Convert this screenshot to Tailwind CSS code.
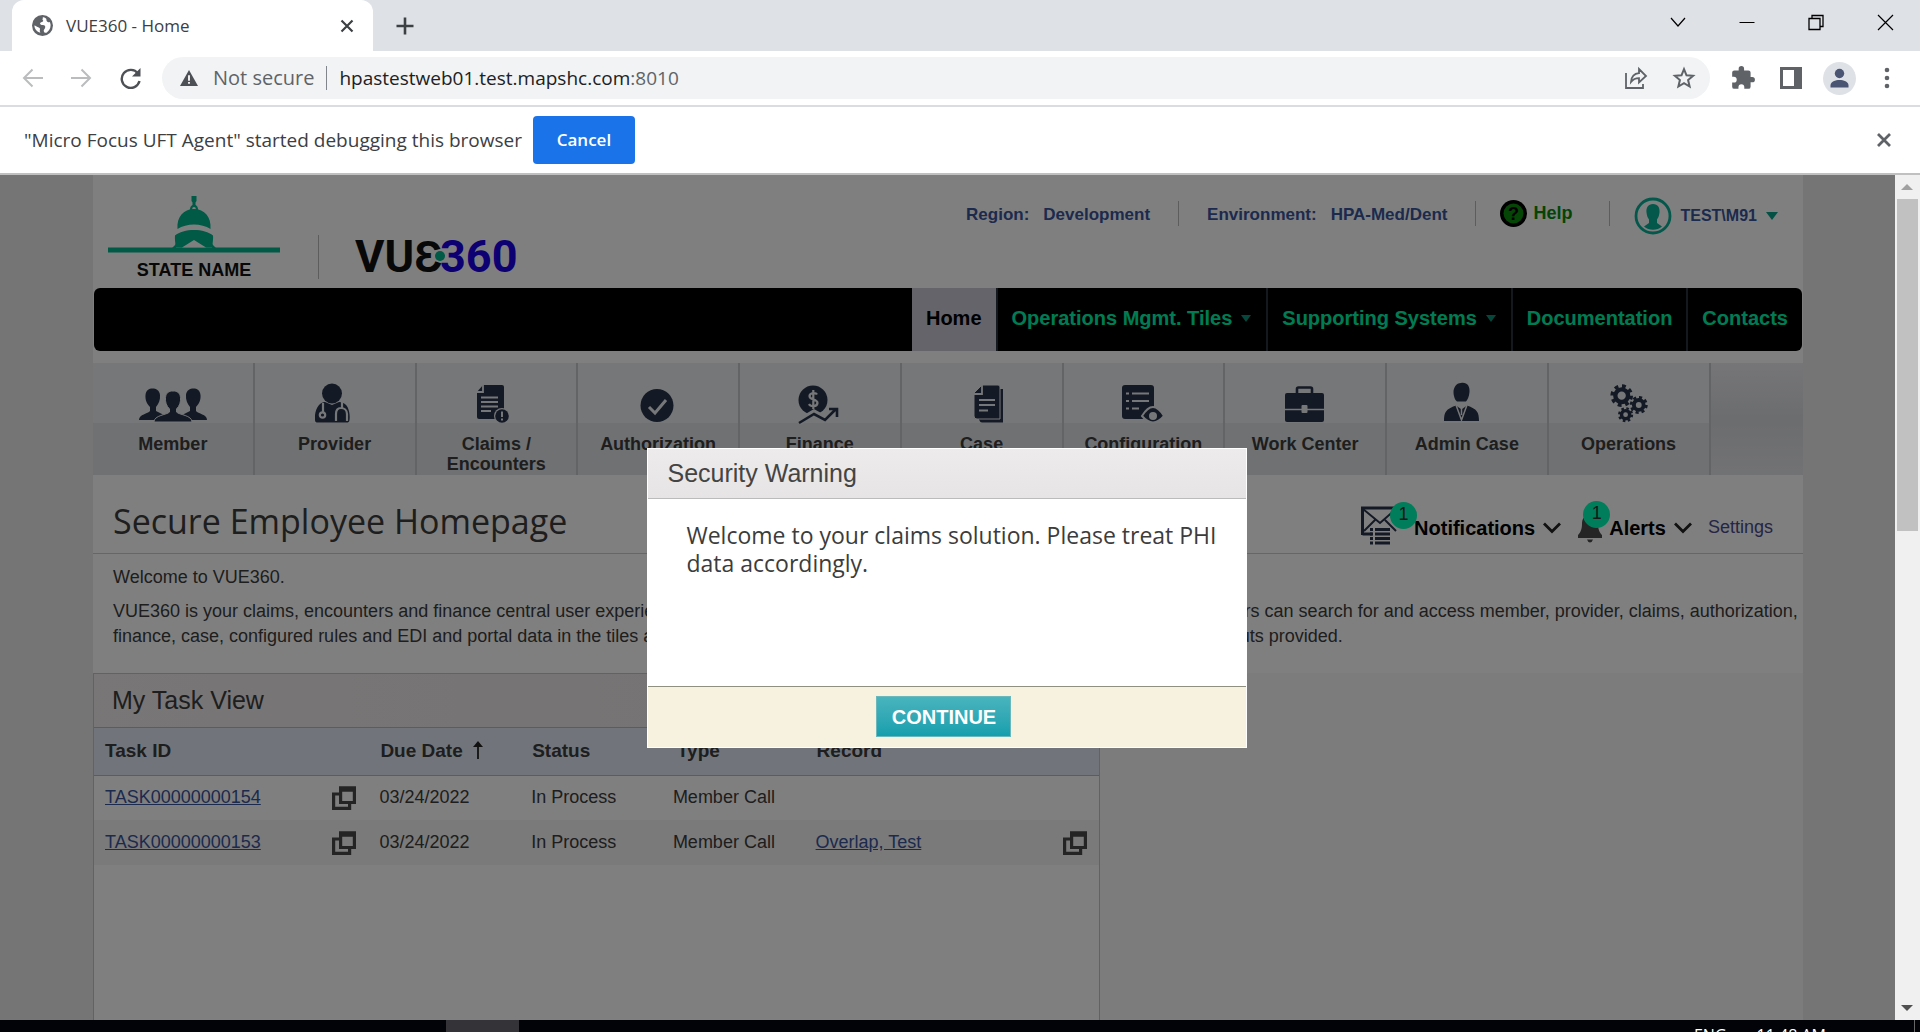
<!DOCTYPE html>
<html lang="en">
<head>
<meta charset="utf-8">
<title>VUE360 - Home</title>
<script src="https://cdn.jsdelivr.net/npm/@tailwindcss/browser@4"></script>
</head>
<body class="h-screen flex flex-col overflow-hidden bg-white font-['Liberation_Sans',Arial,sans-serif] text-[18px] text-[#3c3c3c]">

<!-- Browser tab strip -->
<div class="flex shrink-0 h-[51px] bg-[#dee1e6] font-['Open_Sans',sans-serif] items-stretch pl-3">
  <div class="flex items-center w-[361px] bg-white rounded-t-xl pl-5 pr-4">
    <svg class="size-[21px]" viewBox="0 0 24 24"><circle cx="12" cy="12" r="12" fill="#5f6368"/><path d="M12 2.500c1.500 1-1 2 .5 3.500s-2 2-3 3 1 2.500 3 2.500 3 1 2.500 3-2 2-1.500 4 2 2 3.500 1.500A10 10 0 0 0 20.500 8c-1.500 1-2.500 0-3.500-1s0-2-1-3-2.500-1.500-4-1.500zM2.600 12c2 0 2.500 1.500 4.400 2s2.500 1.500 2 3 .5 2 .5 3.300A9.600 9.600 0 0 1 2.600 12z" fill="#fff"/></svg>
    <span class="ml-[13px] text-[17px] text-[#3c4043] grow">VUE360 - Home</span>
    <button aria-label="Close tab"><svg class="size-5" viewBox="0 0 20 20" stroke="#3c4043" stroke-width="2.200"><path d="M4.500 4.500l11 11M15.500 4.500l-11 11"/></svg></button>
  </div>
  <button aria-label="New tab" class="ml-5"><svg class="size-6" viewBox="0 0 24 24" stroke="#3c4043" stroke-width="2.600"><path d="M12 3.500v17M3.500 12h17"/></svg></button>
  <div class="ml-auto flex items-center gap-[45px] pr-[23px] pb-2">
    <button aria-label="Search tabs"><svg class="size-6" viewBox="0 0 24 24" fill="none" stroke="#000" stroke-width="1.200"><path d="M5 8l7 8 7-8"/></svg></button>
    <button aria-label="Minimize"><svg class="size-6" viewBox="0 0 24 24" stroke="#000"><path d="M4.500 12.500h15"/></svg></button>
    <button aria-label="Restore"><svg class="size-6" viewBox="0 0 24 24" fill="none" stroke="#000" stroke-width="1.300"><path d="M5 8.500h11v11H5zM8 8.500V5.500h11v11h-3"/></svg></button>
    <button aria-label="Close window"><svg class="size-6" viewBox="0 0 24 24" stroke="#000" stroke-width="1.200"><path d="M5 5l15 15M20 5L5 20"/></svg></button>
  </div>
</div>

<!-- Browser toolbar -->
<div class="flex shrink-0 h-14 items-center border-b-2 border-[#dadce0] font-['Open_Sans',sans-serif] text-[20px] pl-5 pr-[22px]">
  <button aria-label="Back"><svg class="size-6" viewBox="0 0 24 24" fill="none" stroke="#babcbe" stroke-width="2"><path d="M23 12H5M12.500 3.500L4 12l8.500 8.500"/></svg></button>
  <button aria-label="Forward" class="ml-[26px]"><svg class="size-6" viewBox="0 0 24 24" fill="none" stroke="#babcbe" stroke-width="2"><path d="M1 12h18M11.500 3.500L20 12l-8.500 8.500"/></svg></button>
  <button aria-label="Reload" class="ml-6"><svg class="size-6" viewBox="0 0 24 24" fill="none" stroke="#4d5156" stroke-width="2.400"><path d="M20 7.500A9 9 0 1 0 21.500 15"/><path d="M22.500 2v8.500H14z" fill="#4d5156" stroke="none"/></svg></button>
  <div class="ml-5 flex grow items-center h-[42px] rounded-full bg-[#f1f3f4] pl-[18px] pr-[14px] text-[#5f6368]">
    <svg class="size-[18px]" viewBox="0 0 20 18"><path d="M10 0l10 18H0z" fill="#4d5156"/><path d="M9 6h2v6H9zM9 13.500h2v2H9z" fill="#fff"/></svg>
    <span class="ml-[15px]">Not secure</span>
    <span class="mx-3 w-px h-6 bg-[#80868b]"></span>
    <div class="flex text-[19px]"><input aria-label="Address" class="field-sizing-content bg-transparent text-[#202124] outline-none" value="hpastestweb01.test.mapshc.com"><span>:8010</span></div>
    <button aria-label="Share" class="ml-auto"><svg class="size-6" viewBox="0 0 24 24" fill="none" stroke="#5f6368" stroke-width="1.800"><path d="M2 7v15h17v-4M7 16c.5-6 3.500-8.500 8-8.800V3l7 7-7 6.500v-4.300c-4 0-6 1.300-8 3.800z"/></svg></button>
    <button aria-label="Bookmark" class="ml-6"><svg class="size-6" viewBox="0 0 24 24" fill="none" stroke="#5f6368" stroke-width="2"><path d="M12 3.200l2.500 6.100 6.600.5-5 4.300 1.500 6.400L12 17.100l-5.600 3.400 1.500-6.400-5-4.300 6.600-.5z"/></svg></button>
  </div>
  <button aria-label="Extensions" class="ml-5"><svg class="size-[26px]" viewBox="0 0 24 24" fill="#5f6368"><path d="M20.500 11H19V7a2 2 0 0 0-2-2h-4V3.500a2.500 2.500 0 0 0-5 0V5H4a2 2 0 0 0-2 2v3.800h1.500a2.700 2.700 0 0 1 0 5.400H2V20a2 2 0 0 0 2 2h3.800v-1.500a2.700 2.700 0 0 1 5.400 0V22H17a2 2 0 0 0 2-2v-4h1.500a2.500 2.500 0 0 0 0-5z"/></svg></button>
  <button aria-label="Side panel" class="ml-6"><svg class="size-[22px]" viewBox="0 0 22 22"><path d="M0 0h22v22H0z" fill="#5f6368"/><path d="M3 3h11v16H3z" fill="#fff"/></svg></button>
  <button aria-label="Profile" class="ml-[21px]"><svg class="size-[33px]" viewBox="0 0 33 33"><circle cx="16.500" cy="16.500" r="16.500" fill="#dee1e6"/><g fill="#4a5574"><circle cx="16.500" cy="11.500" r="4.700"/><path d="M7.500 25.500v-2c0-4 5-5.500 9-5.500s9 1.500 9 5.500v2z"/></g></svg></button>
  <button aria-label="Menu" class="ml-5"><svg class="size-[22px]" viewBox="0 0 22 22" fill="#5f6368"><circle cx="11" cy="3" r="2.300"/><circle cx="11" cy="11" r="2.300"/><circle cx="11" cy="19" r="2.300"/></svg></button>
</div>

<!-- Debugging notice -->
<div class="flex shrink-0 h-[68px] items-center border-b-2 border-[#c0c0c0] bg-white pl-6 pr-[26px] font-['Open_Sans',sans-serif] text-[19px] text-[#3c4043]">
  <span>"Micro Focus UFT Agent" started debugging this browser</span>
  <button class="ml-[11px] h-12 w-[102px] rounded bg-[#1a73e8] text-[17px] font-semibold text-white">Cancel</button>
  <button aria-label="Dismiss" class="ml-auto"><svg class="size-5" viewBox="0 0 20 20" stroke="#5f6368" stroke-width="2.800"><path d="M4 4l12 12M16 4L4 16"/></svg></button>
</div>

<div class="flex grow min-h-0">
  <!-- Web page -->
  <div class="relative grow overflow-hidden bg-[#ebebeb] pl-[93px] pr-[92px]">
    <div class="bg-[#f8f8f8] h-full">
     <div class="bg-white">
      <header class="flex h-[113px] justify-between">
        <div class="flex pl-[15px] pt-5">
          <svg class="w-[172px] h-[92px]" viewBox="0 0 172 92">
            <g fill="#00b48c">
              <path d="M0 52.500h172v5H0z"/><path d="M83.500 1h5v5l-1 1.500v3h-3v-3l-1-1.500z"/>
              <path fill-rule="evenodd" d="M86 9.500a4.500 4.500 0 0 1 3.500 6.500h-7A4.500 4.500 0 0 1 86 9.500zm0 2.500a1.800 1.800 0 1 0 0 3.600 1.800 1.800 0 0 0 0-3.600z"/>
              <path d="M69.500 34c-1-12 6-20 16.500-20s17.500 8 16.500 20c-9-6-24-6-33 0z"/>
              <path d="M67 52.500c1-4-.5-7 0-12 8-7.500 30-7.500 38 0 .5 5-1 8 0 12z"/><path d="M62 55l6-6v6zM110 55l-6-6v6z"/>
            </g>
            <path d="M74 52.500l12-7.500 12 7.500z" fill="#fff"/>
            <text x="86" y="81" text-anchor="middle" class="font-bold text-[18px]" fill="#111">STATE NAME</text>
          </svg>
          <span class="mt-10 ml-[38px] h-11 w-px bg-[#bbb]"></span>
          <svg class="ml-9 mt-6 w-[176px] h-[68px]" viewBox="0 0 176 68">
            <text x="0" y="53" class="font-['Roboto',sans-serif] font-bold text-[45px]" fill="#111">VUƐ</text>
            <text x="85" y="53" class="font-['Roboto',sans-serif] font-bold text-[45px]" fill="#1a00e6">360</text>
            <circle cx="85" cy="37" r="6.500" fill="#fff"/><circle cx="85" cy="37" r="5" fill="#00b48c"/>
          </svg>
        </div>
        <div class="flex items-start pt-[22px] pr-[25px] text-[17px] font-bold text-[#38549c]">
          <div class="flex h-9 items-center gap-[14px]"><span>Region:</span><span>Development</span></div>
          <span class="ml-[28px] mr-[28px] mt-1 h-[25px] w-px bg-[#bbb]"></span>
          <div class="flex h-9 items-center gap-[14px]"><span>Environment:</span><span>HPA-Med/Dent</span></div>
          <span class="ml-[28px] mr-6 mt-1 h-[25px] w-px bg-[#bbb]"></span>
          <a href="#" class="flex h-8 items-center text-[18px] text-[#088a08]">
            <svg class="size-[27px] mr-[6px]" viewBox="0 0 27 27"><circle cx="13.500" cy="13.500" r="13.500" fill="#000"/><circle cx="13.500" cy="13.500" r="10" fill="#0b8a0b"/><text x="13.500" y="20" text-anchor="middle" fill="#000" class="text-[18px] font-bold">?</text></svg>Help</a>
          <span class="ml-[37px] mr-6 mt-1 h-[25px] w-px bg-[#bbb]"></span>
          <button class="flex h-[38px] items-center text-[16px]">
            <svg class="size-[38px] mr-2" viewBox="0 0 38 38"><circle cx="19" cy="19" r="17" fill="none" stroke="#08b096" stroke-width="2.800"/><path d="M19 7c5 0 7 4 6.500 8.500-.4 4-1.500 5.500-2.500 7v3.500l5 3.500a14 14 0 0 1-18 0l5-3.500v-3.500c-1-1.500-2.100-3-2.500-7C12 11 14 7 19 7z" fill="#08b096"/></svg>TEST\M91
            <svg class="ml-[9px] w-3 h-2" viewBox="0 0 12 8"><path d="M0 0h12L6 8z" fill="#08a08a"/></svg>
          </button>
        </div>
      </header>

      <nav class="mx-px flex h-[63px] justify-end overflow-hidden rounded-md bg-black text-[20px] font-bold text-[#00f8a8]">
        <a href="#" class="flex items-center px-[14px] pb-[3px] bg-[#c8c8d4] text-black">Home</a>
        <a href="#" class="flex items-center px-[14px] pb-[3px] border-l-2 border-[#28303e]">Operations Mgmt. Tiles<svg class="ml-2 w-3 h-[7px]" viewBox="0 0 12 7"><path d="M1 0h10L6 7z" fill="#0d8f78"/></svg></a>
        <a href="#" class="flex items-center px-[14px] pb-[3px] border-l-2 border-[#28303e]">Supporting Systems<svg class="ml-2 w-3 h-[7px]" viewBox="0 0 12 7"><path d="M1 0h10L6 7z" fill="#0d8f78"/></svg></a>
        <a href="#" class="flex items-center px-[14px] pb-[3px] border-l-2 border-[#28303e]">Documentation</a>
        <a href="#" class="flex items-center px-[14px] pb-[3px] border-l-2 border-[#28303e]">Contacts</a>
      </nav>

      <!-- Tiles -->
      <div class="mt-3 flex h-[112px] bg-linear-to-b from-[#ececf0] via-[#d8dadd] to-[#e4e5e8] text-center font-bold leading-5">
        <a href="#" class="flex flex-col items-center w-[9.46%] border-r-2 border-[#c6c8ca] bg-[linear-gradient(#eceef0_0,#eceef0_60px,#dfe3e6_60px)] pt-5">
          <svg class="h-10 w-[70px]" viewBox="0 0 70 40" fill="#28344a"><path d="M1 37c0-6 9-6 11-9v-4c-3-3-5-7-4.500-12C8 7 11 5.500 14.500 5.500S21.500 7 22 12c.5 5-1.500 9-4 12v4l7 3.500-8 5.500z"/><path d="M69 37c0-6-9-6-11-9v-4c3-3 5-7 4.500-12-.5-5-3.500-6.500-7-6.500S48.500 7 48 12c-.5 5 1.500 9 4 12v4l-7 3.500 8 5.500z"/><path d="M16 39c0-7 13-7 15.500-10v-3c-3-3-4.500-7-4-11.500C28 9.500 31 8 35 8s7 1.500 7.500 6.500c.5 4.500-1 8.500-4 11.500v3C41 32 54 32 54 39z" stroke="#eceef0"/></svg>
          <span class="mt-[11px]">Member</span></a>
        <a href="#" class="flex flex-col items-center w-[9.46%] border-r-2 border-[#c6c8ca] bg-[linear-gradient(#eceef0_0,#eceef0_60px,#dfe3e6_60px)] pt-5">
          <svg class="size-10" viewBox="1 0 40 40" fill="#28344a"><circle cx="18" cy="10.500" r="10"/><path d="M5 22c3-3 5-3 6-3l7 3 7-3c4 0 7 2 8.500 5 2 4 2.500 9 2 13-.3 2-1 2.500-3 2.500H4c-2 0-3-.5-3-2.500-.5-5 .5-11 4-15z"/><g fill="none" stroke="#eceef0" stroke-width="2.200"><path d="M9 20v9"/><circle cx="8.500" cy="32" r="2.700"/><path d="M28 19v6M22 38v-7c0-4 2-6 5-6s6 2 6 6v7"/></g></svg>
          <span class="mt-[11px]">Provider</span></a>
        <a href="#" class="flex flex-col items-center w-[9.46%] border-r-2 border-[#c6c8ca] bg-[linear-gradient(#eceef0_0,#eceef0_60px,#dfe3e6_60px)] pt-5">
          <svg class="size-10" viewBox="1 0 40 40"><path d="M8 2h19q2 0 2 2v32H4q-2 0-2-2V9z" fill="#28344a"/><path d="M2 9h6V2M6 14.500h17M6 19h17M6 23.500h17M6 28h10" fill="none" stroke="#eceef0" stroke-width="1.800"/><circle cx="27" cy="33" r="8" fill="#eceef0"/><circle cx="27" cy="33" r="6.800" fill="#28344a"/><path d="M27 28.500v5.500M27 35.500v2" stroke="#eceef0" stroke-width="2"/></svg>
          <span class="mt-[11px]">Claims /<br>Encounters</span></a>
        <a href="#" class="flex flex-col items-center w-[9.46%] border-r-2 border-[#c6c8ca] bg-[linear-gradient(#eceef0_0,#eceef0_60px,#dfe3e6_60px)] pt-5">
          <svg class="size-10" viewBox="0 0 40 40"><circle cx="19" cy="22.500" r="16.500" fill="#28344a"/><path d="M11 24l6 6 11-13" fill="none" stroke="#eceef0" stroke-width="3"/></svg>
          <span class="mt-[11px]">Authorization</span></a>
        <a href="#" class="flex flex-col items-center w-[9.46%] border-r-2 border-[#c6c8ca] bg-[linear-gradient(#eceef0_0,#eceef0_60px,#dfe3e6_60px)] pt-5">
          <svg class="size-10 overflow-visible" viewBox="1 0 40 40"><circle cx="14" cy="17" r="14.500" fill="#28344a"/><path d="M18 11.500c-1-2-7-2-7.500 1.500 0 4.500 8 2.500 8 7-.5 4-7 4-8.500 1M14.300 7v19" fill="none" stroke="#eceef0" stroke-width="2.200"/><path d="M0 39l15-9 11 6 12-11" fill="none" stroke="#eceef0" stroke-width="7"/><path d="M0 40l15-9 11 6 11-11M30 26h8v8" fill="none" stroke="#28344a" stroke-width="2.600"/></svg>
          <span class="mt-[11px]">Finance</span></a>
        <a href="#" class="flex flex-col items-center w-[9.46%] border-r-2 border-[#c6c8ca] bg-[linear-gradient(#eceef0_0,#eceef0_60px,#dfe3e6_60px)] pt-5">
          <svg class="size-10 overflow-visible" viewBox="-6 0 40 40"><path d="M15 6h20v33.500H14q-2 0-3-3" fill="#28344a"/><path d="M14 2h16q2 0 2 2v32H9q-3 0-3-3V10z" fill="#28344a" stroke="#eceef0"/><path d="M5.500 11H14V2M11 17h16M11 22h16M11 27.500h9" fill="none" stroke="#eceef0" stroke-width="1.800"/></svg>
          <span class="mt-[11px]">Case</span></a>
        <a href="#" class="flex flex-col items-center w-[9.46%] border-r-2 border-[#c6c8ca] bg-[linear-gradient(#eceef0_0,#eceef0_60px,#dfe3e6_60px)] pt-5">
          <svg class="size-10 overflow-visible" viewBox="0 0 40 40"><rect x="-1" y="2" width="32" height="34" rx="3" fill="#28344a"/><path d="M3 10.500h3M9 10.500h17M3 18h3M9 18h17M3 25.500h3M9 25.500h7" stroke="#eceef0" stroke-width="2.200"/><path d="M19 33q11-18 22 0-11 13-22 0z" fill="#28344a" stroke="#eceef0" stroke-width="2"/><circle cx="30" cy="33" r="4" fill="#eceef0"/></svg>
          <span class="mt-[11px]">Configuration</span></a>
        <a href="#" class="flex flex-col items-center w-[9.46%] border-r-2 border-[#c6c8ca] bg-[linear-gradient(#eceef0_0,#eceef0_60px,#dfe3e6_60px)] pt-5">
          <svg class="size-10" viewBox="0 0 40 40"><path d="M12 11V6q0-1.500 1.500-1.500h12Q27 4.500 27 6v5" fill="none" stroke="#28344a" stroke-width="2.600"/><rect y="10" width="39" height="29" rx="2" fill="#28344a"/><path d="M0 26.500h39" stroke="#eceef0" stroke-width="1.500"/><rect x="16.500" y="22" width="6" height="8" rx="1" fill="#eceef0"/></svg>
          <span class="mt-[11px]">Work Center</span></a>
        <a href="#" class="flex flex-col items-center w-[9.46%] border-r-2 border-[#c6c8ca] bg-[linear-gradient(#eceef0_0,#eceef0_60px,#dfe3e6_60px)] pt-5">
          <svg class="size-10 overflow-visible" viewBox="0 0 40 40" fill="#28344a"><path d="M14 0c6-1 9 3 8.500 9-.5 5-2 8-3.500 9.500h-9C8 17 6.500 13 6.500 9S9 0 14 0z"/><path d="M-3 38c0-9 2-12 12-15.500l5.500 4 5.500-4C30 26 32 29 32 38z"/><path d="M9 22l5.500 15L20 22M14.500 26v6" fill="none" stroke="#eceef0" stroke-width="1.500"/></svg>
          <span class="mt-[11px]">Admin Case</span></a>
        <a href="#" class="flex flex-col items-center w-[9.46%] border-r-2 border-[#c6c8ca] bg-[linear-gradient(#eceef0_0,#eceef0_60px,#dfe3e6_60px)] pt-5">
          <svg class="size-10" viewBox="-1 0 41 41" fill="none" stroke="#28344a"><circle cx="12" cy="13" r="6.500" stroke-width="4.500"/><circle cx="12" cy="13" r="9.800" stroke-width="3.600" stroke-dasharray="3.900 3.800"/><circle cx="29.500" cy="22.500" r="5" stroke-width="4"/><circle cx="29.500" cy="22.500" r="7.800" stroke-width="2.800" stroke-dasharray="3.200 2.930"/><circle cx="16" cy="32.500" r="4.200" stroke-width="3.500"/><circle cx="16" cy="32.500" r="6.500" stroke-width="2.500" stroke-dasharray="2.600 2.500"/></svg>
          <span class="mt-[11px]">Operations</span></a>
      </div>

      <!-- Page title -->
      <div class="flex h-[79px] items-center border-b border-[#ccc] pl-5 pr-[30px]">
        <h1 class="grow pb-1 pt-[17px] font-['Open_Sans',sans-serif] text-[34px] leading-[52px]">Secure Employee Homepage</h1>
        <a href="#" class="relative mt-7 flex items-center text-[20px] font-bold text-black">
          <svg class="w-[38px] h-10 mr-[15px] -mt-1" viewBox="0 0 38 40"><path d="M1.500 29V2H36v17M1.500 28h10" fill="none" stroke="#28344a" stroke-width="3"/><path d="M2 3l17 14L35 3M3 25l11-11M35 25L24 14" fill="none" stroke="#28344a" stroke-width="2"/><path d="M9 23.500h3M14 23.500h15M9 28h3M14 28h15M9 32.500h3M14 32.500h15M9 37h3M14 37h15" stroke="#28344a" stroke-width="3"/></svg>
          <span class="absolute left-[29px] -top-2 size-[27px] rounded-full bg-[#00fab4] text-center text-[18px] font-normal leading-6 text-[#333]">1</span>
          Notifications
          <svg class="ml-2 w-[18px] h-3" viewBox="0 0 18 12" fill="none" stroke="#222" stroke-width="2.800"><path d="M1 1.500l8 8 8-8"/></svg>
        </a>
        <a href="#" class="relative ml-4 mt-7 flex items-center text-[20px] font-bold text-black">
          <svg class="w-[26px] h-[30px] mr-[6px]" viewBox="0 0 26 30" fill="#4a4a4a"><path d="M13 2c6 0 8 4 8 9 0 6 2 9 4 11v3H1v-3c2-2 4-5 4-11 0-5 2-9 8-9zM10 26.500h6q-1 3-3 3t-3-3z"/></svg>
          <span class="absolute left-[6px] -top-3 size-[27px] rounded-full bg-[#00fab4] text-center text-[18px] font-normal leading-6 text-[#333]">1</span>
          Alerts
          <svg class="ml-2 w-[18px] h-3" viewBox="0 0 18 12" fill="none" stroke="#222" stroke-width="2.800"><path d="M1 1.500l8 8 8-8"/></svg>
        </a>
        <a href="#" class="ml-4 mt-[26px] text-[#4a4a8c]">Settings</a>
      </div>

      <div class="h-[119px] pl-5 pt-[11px] leading-[25px]">
        <p>Welcome to VUE360.</p>
        <p class="mt-[9px]">VUE360 is your claims, encounters and finance central user experience. From this new secure employee homepage all of your authorized users can search for and access member, provider, claims, authorization, finance, case, configured rules and EDI and portal data in the tiles above, and work their tasks in the views below using the menus and shortcuts provided.</p>
      </div>
     </div>

      <!-- Task panel -->
      <section class="h-[400px] w-[58.9%] border border-[#c4c4c4] bg-white">
        <h2 class="h-[54px] border-b border-[#b8b8bc] bg-linear-to-r from-[#f0ecec] to-[#e8e4e4] pl-[18px] text-[25px] leading-[53px]">My Task View</h2>
        <table class="w-full table-fixed text-left">
          <colgroup><col class="w-[27.3%]"><col class="w-[15.1%]"><col class="w-[14.1%]"><col class="w-[14.2%]"><col></colgroup>
          <thead class="h-[47px] border-b border-[#b8b8bc] bg-[#e3ebf6] text-[19px]">
            <tr><th class="pl-[11px]">Task ID</th><th class="pl-3">Due Date <svg class="ml-1 inline w-3 h-[18px] -mt-1" viewBox="0 0 12 18"><path d="M6 18V3" stroke="#222" stroke-width="1.800"/><path d="M6 0l5 6H1z" fill="#222"/></svg></th><th class="pl-3">Status</th><th class="pl-[15px]">Type</th><th class="pl-3">Record</th></tr>
          </thead>
          <tbody>
            <tr class="h-[45px]">
              <td class="pl-[11px]"><div class="flex items-center justify-between pr-3"><a href="#" class="text-[#38549c] underline">TASK00000000154</a><svg class="size-6" viewBox="0 0 24 24" fill="none" stroke="#484848" stroke-width="3.200"><path d="M8 8H1.600v14.400h16V17"/><path d="M8.600 3h13.800v13.500H8.600z"/><path d="M7 3h17" stroke-width="5.500"/></svg></div></td>
              <td class="pl-[11px]">03/24/2022</td><td class="pl-[11px]">In Process</td><td class="pl-[11px]">Member Call</td><td></td></tr>
            <tr class="h-[45px] bg-[#f4f4f4]">
              <td class="pl-[11px]"><div class="flex items-center justify-between pr-3"><a href="#" class="text-[#38549c] underline">TASK00000000153</a><svg class="size-6" viewBox="0 0 24 24" fill="none" stroke="#484848" stroke-width="3.200"><path d="M8 8H1.600v14.400h16V17"/><path d="M8.600 3h13.800v13.500H8.600z"/><path d="M7 3h17" stroke-width="5.500"/></svg></div></td>
              <td class="pl-[11px]">03/24/2022</td><td class="pl-[11px]">In Process</td><td class="pl-[11px]">Member Call</td>
              <td class="pl-[11px]"><div class="flex items-center justify-between pr-3"><a href="#" class="text-[#38549c] underline">Overlap, Test</a><svg class="size-6" viewBox="0 0 24 24" fill="none" stroke="#484848" stroke-width="3.200"><path d="M8 8H1.600v14.400h16V17"/><path d="M8.600 3h13.800v13.500H8.600z"/><path d="M7 3h17" stroke-width="5.500"/></svg></div></td></tr>
          </tbody>
        </table>
      </section>
    </div>

    <!-- Security dialog -->
    <div class="absolute inset-0 flex items-center justify-center bg-black/50">
      <div role="dialog" aria-labelledby="warn-title" class="flex h-[300px] w-[600px] flex-col border border-white bg-white">
        <h2 id="warn-title" class="h-[50px] border-b border-[#bbb] bg-linear-to-b from-[#edebeb] to-[#e6e4e4] pl-[19px] text-[25px] leading-[48px] text-[#444]">Security Warning</h2>
        <p class="grow pl-[38px] pr-4 pt-[22px] font-['Open_Sans',sans-serif] text-[23px] leading-7">Welcome to your claims solution. Please treat PHI data accordingly.</p>
        <div class="flex h-[61px] items-center justify-center border-t border-[#909080] bg-[#f7f1df] pr-[7px]">
          <button class="h-[41px] w-[135px] border border-[#6bb8bc] bg-linear-to-b from-[#48b4bd] to-[#129fae] text-[20px] font-bold text-white">CONTINUE</button>
        </div>
      </div>
    </div>
  </div>

  <!-- Scrollbar -->
  <div class="flex w-[25px] shrink-0 flex-col items-center bg-[#f0f0f0] py-2">
    <svg class="w-3 h-2" viewBox="0 0 12 8"><path d="M0 7l6-6 6 6z" fill="#a0a0a0"/></svg>
    <div class="mt-2 h-[332px] w-[21px] bg-[#c1c1c1]"></div>
    <svg class="mt-auto w-3 h-2" viewBox="0 0 12 8"><path d="M0 1h12L6 7z" fill="#505050"/></svg>
  </div>
</div>

<!-- Taskbar -->
<div class="flex h-3 shrink-0 items-start overflow-hidden bg-[#010308] pr-[5px] font-['Open_Sans',sans-serif] text-[16px] leading-5 text-white">
  <span class="ml-[446px] h-3 w-[73px] bg-[#343338]"></span>
  <span class="ml-auto pt-[5px]">ENG</span><span class="ml-[30px] pt-[5px]">11:48 AM</span>
  <span class="ml-[88px] h-3 w-px bg-[#666]"></span>
</div>
</body>
</html>
